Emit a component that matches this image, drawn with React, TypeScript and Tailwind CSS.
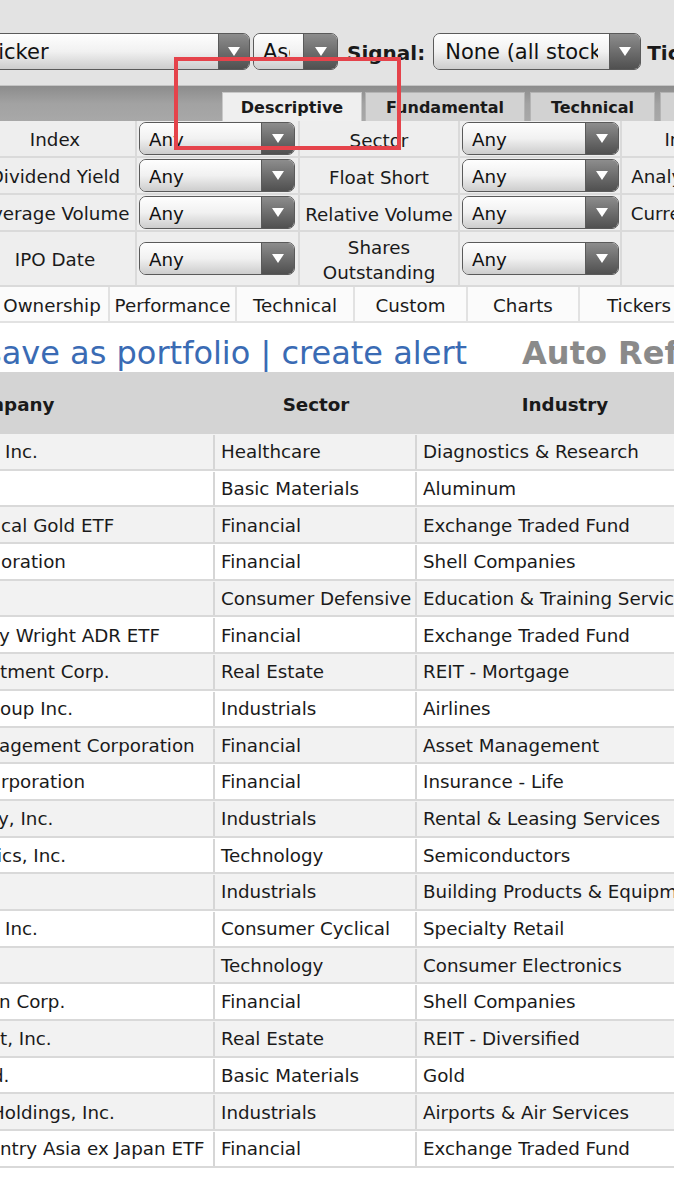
import React from "react";

interface Row {
  company: string;
  shift: string;
  sector: string;
  industry: string;
}

const ROWS: Row[] = [
  { company: "Inc.", shift: "ml-[5px]", sector: "Healthcare", industry: "Diagnostics & Research" },
  { company: "", shift: "", sector: "Basic Materials", industry: "Aluminum" },
  { company: "cal Gold ETF", shift: "ml-[1px]", sector: "Financial", industry: "Exchange Traded Fund" },
  { company: "oration", shift: "ml-[1px]", sector: "Financial", industry: "Shell Companies" },
  { company: "", shift: "", sector: "Consumer Defensive", industry: "Education & Training Services" },
  { company: "y Wright ADR ETF", shift: "ml-[-1px]", sector: "Financial", industry: "Exchange Traded Fund" },
  { company: "tment Corp.", shift: "ml-[0px]", sector: "Real Estate", industry: "REIT - Mortgage" },
  { company: "oup Inc.", shift: "ml-[0px]", sector: "Industrials", industry: "Airlines" },
  { company: "agement Corporation", shift: "ml-[-1px]", sector: "Financial", industry: "Asset Management" },
  { company: "rporation", shift: "ml-[1px]", sector: "Financial", industry: "Insurance - Life" },
  { company: "y, Inc.", shift: "ml-[-2px]", sector: "Industrials", industry: "Rental & Leasing Services" },
  { company: "ics, Inc.", shift: "ml-[-3px]", sector: "Technology", industry: "Semiconductors" },
  { company: "", shift: "", sector: "Industrials", industry: "Building Products & Equipment" },
  { company: "Inc.", shift: "ml-[5px]", sector: "Consumer Cyclical", industry: "Specialty Retail" },
  { company: "", shift: "", sector: "Technology", industry: "Consumer Electronics" },
  { company: "n Corp.", shift: "ml-[-1px]", sector: "Financial", industry: "Shell Companies" },
  { company: "t, Inc.", shift: "ml-[0px]", sector: "Real Estate", industry: "REIT - Diversified" },
  { company: "d.", shift: "ml-[-8px]", sector: "Basic Materials", industry: "Gold" },
  { company: "Holdings, Inc.", shift: "ml-[-9px]", sector: "Industrials", industry: "Airports & Air Services" },
  { company: "ntry Asia ex Japan ETF", shift: "ml-[0px]", sector: "Financial", industry: "Exchange Traded Fund" },
];

const FILTERS: [string, string, string][] = [
  ["Index", "Sector", "Industry"],
  ["Dividend Yield", "Float Short", "Analyst Recom."],
  ["Average Volume", "Relative Volume", "Current Volume"],
  ["IPO Date", "Shares Outstanding", ""],
];

const VIEWS = [
  { label: "Ownership", w: "w-[114px]" },
  { label: "Performance", w: "w-[127px]" },
  { label: "Technical", w: "w-[118px]" },
  { label: "Custom", w: "w-[113px]" },
  { label: "Charts", w: "w-[112px]" },
  { label: "Tickers", w: "w-[120px]" },
];

function Arrow() {
  return (
    <svg width="14" height="11" viewBox="0 0 14 11">
      <path d="M1 1h12L7 10z" fill="#fff" />
    </svg>
  );
}

function Select({ text, cls, textCls, arrowW }: { text: string; cls: string; textCls: string; arrowW: string }) {
  return (
    <div className={`flex shrink-0 overflow-hidden rounded-[7px] border-[1.5px] border-[#5a5a5a] ${cls}`}>
      <div className={`flex min-w-0 flex-1 items-center bg-linear-to-b from-[#fefefe] via-[#f1f1f1] to-[#cdcdcd] text-[#111] ${textCls}`}>
        <span className="min-w-0 flex-1 overflow-hidden whitespace-nowrap">{text}</span>
      </div>
      <div className={`flex shrink-0 items-center justify-center border-l border-[#5a5a5a] bg-linear-to-b from-[#8d8d8d] to-[#505050] ${arrowW}`}>
        <Arrow />
      </div>
    </div>
  );
}

export default function App() {
  return (
    <div className="relative h-[1200px] w-[674px] overflow-hidden bg-white font-['DejaVu_Sans',sans-serif] text-[#1a1a1a]">
      {/* Order / signal bar */}
      <div className="flex h-[85px] items-start bg-[#e3e3e3] pt-[33px]">
        <Select text="Ticker" cls="ml-[-20px] h-[37px] w-[270px]" textCls="pl-[5px] pr-[8px] pt-[3px] text-[21px]" arrowW="w-[31px]" />
        <Select text="Asc" cls="ml-[3px] h-[37px] w-[85px]" textCls="pl-[9px] pr-[13px] pt-[3px] text-[21px]" arrowW="w-[34px]" />
        <span className="ml-[9px] flex h-[37px] items-center pt-[3px] text-[20px] font-bold">Signal:</span>
        <Select text="None (all stocks)" cls="ml-[8px] h-[37px] w-[208px]" textCls="pl-[11px] pr-[11px] pt-[3px] text-[21px]" arrowW="w-[31px]" />
        <span className="ml-[6px] flex h-[37px] items-center whitespace-nowrap pt-[3px] text-[20px] font-bold">Ticker:</span>
      </div>

      {/* Filter tabs */}
      <div className="flex h-[36px] items-end border-t border-[#c4c4c4] bg-linear-to-b from-[#8c8c8c] via-[#a2a2a2] to-[#a8a8a8] pl-[222px]">
        <div className="flex h-[29px] w-[140px] shrink-0 items-center justify-center border border-b-0 border-[#c8c8c8] bg-[#efefef] pt-[2px] text-[16px] font-bold">
          Descriptive
        </div>
        <div className="ml-[3px] flex h-[29px] w-[160px] shrink-0 items-center justify-center border border-b-0 border-[#b4b4b4] bg-[#d2d2d2] pt-[2px] text-[16px] font-bold">
          Fundamental
        </div>
        <div className="ml-[5px] flex h-[29px] w-[125px] shrink-0 items-center justify-center border border-b-0 border-[#b4b4b4] bg-[#d2d2d2] pt-[2px] text-[16px] font-bold">
          Technical
        </div>
        <div className="ml-[5px] flex h-[29px] w-[60px] shrink-0 items-center justify-center border border-b-0 border-[#b4b4b4] bg-[#d2d2d2] pt-[2px] text-[16px] font-bold">
          All
        </div>
      </div>

      {/* Filter grid */}
      <div className="ml-[-25px] w-[807px] text-[18.3px]">
        {FILTERS.map(([a, b, c], i) => (
          <div
            key={a}
            className={`grid grid-cols-[162px_163px_160px_162px_160px] border-b-2 border-[#dadada] bg-[#eeeeee] ${i === 3 ? "h-[55px]" : "h-[37px]"}`}
          >
            <div className="flex items-center justify-center whitespace-nowrap border-r-2 border-[#dadada] pt-[3px]">{a}</div>
            <div className="flex items-center border-r-2 border-[#dadada] pl-[2px]">
              <Select text="Any" cls="h-[33px] w-[156px]" textCls="pl-[9px] pt-[3px] text-[18.3px]" arrowW="w-[33px]" />
            </div>
            <div className="flex items-center justify-center border-r-2 border-[#dadada] pt-[3px] text-center leading-[25px]">
              {i === 3 ? (
                <span>
                  Shares
                  <br />
                  Outstanding
                </span>
              ) : (
                <span className="whitespace-nowrap">{b}</span>
              )}
            </div>
            <div className="flex items-center border-r-2 border-[#dadada] pl-[2px]">
              <Select text="Any" cls="h-[33px] w-[157px]" textCls="pl-[9px] pt-[3px] text-[18.3px]" arrowW="w-[33px]" />
            </div>
            <div className="flex items-center justify-center whitespace-nowrap pt-[3px]">{c}</div>
          </div>
        ))}
      </div>

      {/* View tabs */}
      <div className="ml-[-4px] flex h-[36px] border-b-2 border-[#e2e2e2] bg-[#fbfbfb] text-[18.3px]">
        {VIEWS.map((v) => (
          <div key={v.label} className={`flex shrink-0 items-center justify-center border-r-2 border-[#e2e2e2] pt-[3px] ${v.w}`}>
            {v.label}
          </div>
        ))}
      </div>

      {/* Links */}
      <div className="flex h-[49px] items-start whitespace-nowrap pt-[12px] text-[32px] leading-[37px]">
        <span className="ml-[-15px] text-[#3a6bb4]">save as portfolio | create alert</span>
        <span className="ml-[55px] font-bold text-[#8a8a8a]">Auto Refresh</span>
      </div>

      {/* Results table */}
      <div className="w-[713px] text-[18.3px]">
        <div className="flex h-[62px] items-center bg-[#d4d4d4] pt-[3px] font-bold">
          <div className="w-[215px] shrink-0 overflow-hidden whitespace-nowrap">
            <span className="ml-[-15px]">mpany</span>
          </div>
          <div className="flex w-[202px] shrink-0 justify-center">Sector</div>
          <div className="flex w-[296px] shrink-0 justify-center">Industry</div>
        </div>
        {ROWS.map((r, i) => (
          <div
            key={i}
            className={`flex h-[36.7px] border-b-2 border-[#d9d9d9] pt-[1px] ${i % 2 === 0 ? "bg-[#f2f2f2]" : "bg-white"}`}
          >
            <div className="flex w-[215px] shrink-0 items-center overflow-hidden whitespace-nowrap border-r-2 border-[#d6d6d6]">
              <span className={r.shift}>{r.company}</span>
            </div>
            <div className="flex w-[202px] shrink-0 items-center whitespace-nowrap border-r-2 border-[#d6d6d6] pl-[6px]">
              {r.sector}
            </div>
            <div className="flex w-[296px] shrink-0 items-center overflow-hidden whitespace-nowrap pl-[6px]">
              {r.industry}
            </div>
          </div>
        ))}
      </div>

      {/* Annotation box */}
      <div className="pointer-events-none absolute left-[174px] top-[57px] h-[93px] w-[227px] border-4 border-[#e5434b]" />
    </div>
  );
}
